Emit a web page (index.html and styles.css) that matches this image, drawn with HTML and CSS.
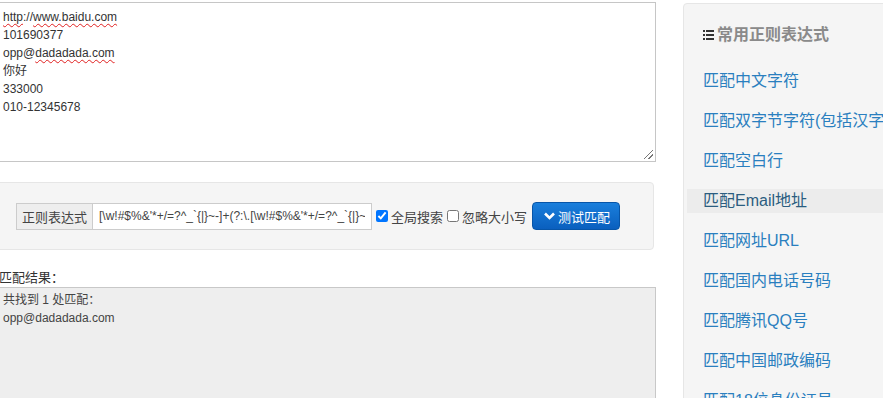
FILE: index.html
```html
<!DOCTYPE html>
<html lang="zh-CN">
<head>
  <meta charset="UTF-8">
  <title>正则表达式测试</title>
  <link rel="stylesheet" href="styles.css">
</head>
<body>

<div class="page">
  <div class="main">
    <div class="editor">
      <div><span class="typo">http</span>://<span class="typo">www.baidu.com</span></div>
      <div>101690377</div>
      <div>opp@<span class="typo">dadadada.com</span></div>
      <div>你好</div>
      <div>333000</div>
      <div>010-12345678</div>
      <span class="grip"></span>
    </div>

    <div class="well">
      <div class="input-group">
        <span class="addon">正则表达式</span>
        <input type="text" class="regex" value="[\w!#$%&amp;'*+/=?^_`{|}~-]+(?:\.[\w!#$%&amp;'*+/=?^_`{|}~-]+)*@(?:[\w](?:[\w-]*[\w])?\.)+[\w](?:[\w-]*[\w])?">
      </div>
      <label class="check"><input type="checkbox" checked>全局搜索</label>
      <label class="check"><input type="checkbox">忽略大小写</label>
      <button class="btn">
        <svg width="11" height="8" viewBox="0 0 11 8"><path d="M1 1.5 L5.5 6 L10 1.5" fill="none" stroke="#fff" stroke-width="2.6"/></svg>
        测试匹配
      </button>
    </div>

    <div class="result-label">匹配结果：</div>
    <div class="result">
      <div>共找到 1 处匹配：</div>
      <div>opp@dadadada.com</div>
    </div>
  </div>

  <div class="sidebar">
    <h4>
      <svg width="11" height="10" viewBox="0 0 11 10">
        <rect x="0" y="0" width="2" height="2"/><rect x="3" y="0" width="8" height="2"/>
        <rect x="0" y="4" width="2" height="2"/><rect x="3" y="4" width="8" height="2"/>
        <rect x="0" y="8" width="2" height="2"/><rect x="3" y="8" width="8" height="2"/>
      </svg>常用正则表达式
    </h4>
    <ul class="links">
      <li><a href="#">匹配中文字符</a></li>
      <li><a href="#">匹配双字节字符(包括汉字在内)</a></li>
      <li><a href="#">匹配空白行</a></li>
      <li class="active"><a href="#">匹配Email地址</a></li>
      <li><a href="#">匹配网址URL</a></li>
      <li><a href="#">匹配国内电话号码</a></li>
      <li><a href="#">匹配腾讯QQ号</a></li>
      <li><a href="#">匹配中国邮政编码</a></li>
      <li><a href="#">匹配18位身份证号</a></li>
    </ul>
  </div>
</div>

</body>
</html>
```

FILE: styles.css
```css
body {
  margin: 0;
  background: #ffffff;
  font-family: "Liberation Sans", "Noto Sans CJK SC", sans-serif;
  color: #333333;
  overflow: hidden;
}

.page {
  display: flex;
  align-items: flex-start;
  gap: 27px;
}

.main {
  width: 660px;
  flex: none;
  margin-left: -4px;
}

.editor {
  position: relative;
  margin-top: 2px;
  height: 148px;
  padding: 5px 6px;
  border: 1px solid #c6c6c6;
  background: #fff;
  font-size: 12px;
  line-height: 18px;
  color: #333;
}

.typo {
  text-decoration: underline wavy #e02020;
  text-decoration-thickness: 1px;
  text-underline-offset: 2px;
}

.grip {
  position: absolute;
  right: 2px;
  bottom: 2px;
  width: 9px;
  height: 9px;
  background: linear-gradient(135deg, transparent 45%, #777 45%, #777 55%, transparent 55%, transparent 70%, #777 70%, #777 80%, transparent 80%);
}

.well {
  margin-top: 20px;
  margin-right: 2px;
  padding: 19px;
  background: #f5f5f5;
  border: 1px solid #e6e6e6;
  border-radius: 4px;
  display: flex;
  align-items: center;
  height: 28px;
}

.input-group {
  display: flex;
  height: 27px;
}

.addon {
  display: flex;
  align-items: center;
  padding: 0 5px;
  width: 65px;
  background: #eeeeee;
  border: 1px solid #cccccc;
  font-size: 13px;
  color: #444;
}

.regex {
  width: 266px;
  height: 25px;
  padding: 0 6px;
  margin: 0;
  border: 1px solid #cccccc;
  border-left: none;
  font-family: "Liberation Sans", sans-serif;
  font-size: 12px;
  color: #444;
  background: #fff;
  outline: none;
}

.check {
  display: flex;
  align-items: center;
  font-size: 13px;
  color: #444;
  margin-left: 4px;
}

.check input {
  width: 12px;
  height: 12px;
  margin: 0 3px 0 0;
}

.btn {
  display: flex;
  align-items: center;
  gap: 3px;
  margin-left: 5px;
  width: 88px;
  height: 28px;
  padding: 0 0 0 11px;
  border: 1px solid #0755a8;
  border-radius: 4px;
  background: linear-gradient(#1a7fdc, #0a5fbe);
  color: #fff;
  font-family: "Liberation Sans", "Noto Sans CJK SC", sans-serif;
  font-size: 13px;
  cursor: pointer;
}

.result-label {
  margin-top: 19px;
  padding-left: 3px;
  font-size: 13px;
  line-height: 18px;
  color: #333;
}

.result {
  height: 140px;
  padding: 3px 6px;
  background: #eeeeee;
  border: 1px solid #c8c8c8;
  font-size: 12px;
  line-height: 18px;
  color: #444;
}

.sidebar {
  flex: none;
  width: 240px;
  height: 420px;
  margin-top: 3px;
  background: #f5f5f5;
  border: 1px solid #e6e6e6;
  border-radius: 4px;
}

.sidebar h4 {
  margin: 19px 0 22px 19px;
  font-size: 16px;
  line-height: 24px;
  color: #8a8a8a;
  display: flex;
  align-items: center;
  gap: 3px;
}

.sidebar h4 svg {
  fill: #333;
}

.links {
  list-style: none;
  margin: 0 0 0 3px;
  padding: 0;
}

.links li {
  line-height: 24px;
  margin-bottom: 16px;
  padding-left: 16px;
  white-space: nowrap;
}

.links li.active {
  background: #ececec;
}

.links a {
  color: #2a7fbf;
  font-size: 16px;
  text-decoration: none;
}

.links li.active a {
  color: #2b5d80;
}
```
